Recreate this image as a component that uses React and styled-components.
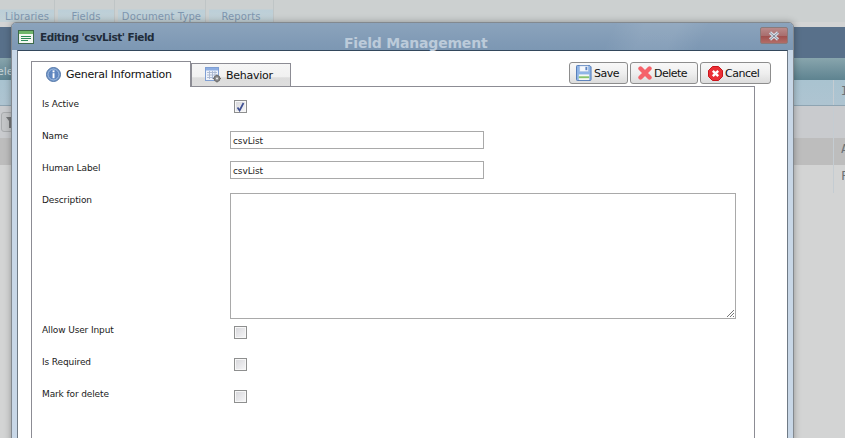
import React from 'react';
import styled, { createGlobalStyle } from 'styled-components';

const GlobalStyle = createGlobalStyle`
    html, body {
        margin: 0;
        padding: 0;
        background: #d3d4d4;
    }
    * {
        box-sizing: border-box;
    }
`;

const Page = styled.div`
    position: relative;
    width: 845px;
    height: 438px;
    overflow: hidden;
    background: #d3d4d4;
    font-family: 'DejaVu Sans', sans-serif;
`;

const TopNav = styled.div`
    height: 22px;
    display: flex;
    background: #ccd0d0;
`;

const NavTab = styled.div`
    width: ${(p) => p.$width}px;
    margin-right: 3px;
    padding-top: 11px;
    text-align: center;
    font-size: 10px;
    line-height: 12px;
    letter-spacing: 0.1px;
    color: #7f97b0;
    border-right: 1px solid #bfc5c6;
    background: linear-gradient(#ccd0d0 0, #ccd0d0 9px, #bccfd8 10px, #c4d2d7 22px);
`;

const Banner = styled.div`
    margin-top: 5px;
    height: 31px;
    background: #58708a;
`;

const GridBand = styled.div`
    height: 22px;
    padding-left: 0;
    overflow: hidden;
    font-size: 11px;
    line-height: 28px;
    text-indent: -3px;
    color: #c5d3d6;
    background: linear-gradient(#88a5ad, #5e8390);
`;

const GridHead = styled.div`
    display: flex;
    justify-content: flex-end;
    height: 26px;
    background: linear-gradient(#a9c3d0, #aec4d1);
    border-bottom: 1px solid #8ea4b2;
`;

const GridCell = styled.div`
    width: 12px;
    padding: 4px 0 0 7px;
    border-left: 1px solid #c4ccd2;
    font-family: 'DejaVu Sans Mono', monospace;
    font-size: 12px;
    color: #6a7277;
`;

const GridRow = styled.div`
    display: flex;
    justify-content: flex-end;
    height: ${(p) => p.$height}px;
    background: ${(p) => p.$bg};
`;

const Toolbar = styled(GridRow)`
    padding-left: 1px;
    justify-content: space-between;
`;

const FilterButton = styled.div`
    width: 12px;
    height: 20px;
    margin-top: 6px;
    padding-left: 4px;
    border: 1px solid #a9acae;
    border-radius: 3px;
    background: #c4c6c8;
`;

const Dialog = styled.div`
    position: absolute;
    left: 11px;
    top: 22px;
    width: 783px;
    height: 440px;
    padding: 0 5px;
    border: 1px solid #83898f;
    border-radius: 5px 5px 0 0;
    background: #c8d7e7;
    box-shadow: 0 0 7px rgba(0, 0, 0, 0.3);
`;

const TitleBar = styled.div`
    position: relative;
    height: 27px;
    margin: 0 -5px;
    padding-left: 6px;
    display: flex;
    align-items: center;
    gap: 6px;
    border-radius: 4px 4px 0 0;
    background:
        linear-gradient(115deg, transparent 0 76%, rgba(255, 255, 255, 0.08) 80% 84%, transparent 88%),
        linear-gradient(#8ba3bc, #7c97b3);
`;

const TitleText = styled.span`
    font-size: 10.5px;
    font-weight: bold;
    letter-spacing: -0.5px;
    color: #1f2c3a;
`;

const GhostTitle = styled.span`
    position: absolute;
    left: 332px;
    top: 12px;
    font-size: 14px;
    font-weight: bold;
    letter-spacing: -0.2px;
    color: #bccbda;
`;

const CloseButton = styled.div`
    position: absolute;
    right: 5px;
    top: 4px;
    width: 28px;
    height: 17px;
    display: flex;
    align-items: center;
    justify-content: center;
    border: 1px solid #8b7a7a;
    border-radius: 2px;
    background: linear-gradient(#b98a8a 0, #a96f6f 50%, #a0504e 55%, #b26d68 100%);
`;

const Body = styled.div`
    height: 420px;
    padding: 10px 32px 0 13px;
    background: #ffffff;
    border-top: 1px solid #33475c;
    border-left: 1px solid #6f7a85;
    border-right: 1px solid #6f7a85;
`;

const TabStrip = styled.div`
    display: flex;
    align-items: flex-end;
    height: 25px;
    position: relative;
`;

const Tab = styled.div`
    height: ${(p) => (p.$active ? 26 : 24)}px;
    width: ${(p) => p.$width}px;
    margin-bottom: -1px;
    padding-left: ${(p) => p.$pad}px;
    display: flex;
    align-items: center;
    gap: ${(p) => p.$gap}px;
    font-size: 11px;
    letter-spacing: -0.25px;
    color: #111111;
    position: relative;
    z-index: ${(p) => (p.$active ? 2 : 1)};
    border: 1px solid #8c8c94;
    border-bottom: ${(p) => (p.$active ? 'none' : '1px solid #8c8c94')};
    background: ${(p) => (p.$active ? '#ffffff' : 'linear-gradient(#f6f6f6 0, #f0f0f0 60%, #dcdcdc 62%, #dedede 100%)')};
`;

const ButtonRow = styled.div`
    margin-left: auto;
    margin-right: -16px;
    margin-bottom: 2px;
    display: flex;
    gap: 2px;
`;

const ActionButton = styled.div`
    width: ${(p) => p.$width}px;
    height: 22px;
    padding-left: ${(p) => p.$pad}px;
    display: flex;
    align-items: center;
    gap: 2px;
    font-size: 11px;
    letter-spacing: -0.5px;
    color: #111111;
    border: 1px solid #8d8d8d;
    border-radius: 3px;
    background: linear-gradient(#f8f8f8 0, #efefef 50%, #dcdcdc 100%);
`;

const Panel = styled.div`
    height: 400px;
    padding: 0 19px 0 10px;
    border: 1px solid #8c8c94;
    border-bottom: none;
    display: grid;
    grid-template-columns: 188px 1fr;
    grid-auto-rows: min-content;
`;

const Label = styled.div`
    height: ${(p) => p.$height}px;
    padding-top: ${(p) => p.$top}px;
    font-size: 9px;
    line-height: 11px;
    letter-spacing: -0.12px;
    color: #1a1a1a;
`;

const FieldCell = styled.div`
    height: ${(p) => p.$height}px;
    padding-top: ${(p) => p.$top}px;
    padding-left: ${(p) => p.$left || 0}px;
`;

const TextBox = styled.div`
    width: 254px;
    height: 18px;
    padding: 0 2px;
    border: 1px solid #a9a9a9;
    font-size: 9px;
    line-height: 18px;
    letter-spacing: -0.1px;
    color: #222222;
`;

const TextArea = styled.div`
    position: relative;
    width: 506px;
    height: 126px;
    border: 1px solid #a9a9a9;
`;

const ResizeGrip = styled.svg`
    position: absolute;
    right: 0;
    bottom: 0;
`;

const CheckBox = styled.div`
    width: 13px;
    height: 13px;
    display: flex;
    align-items: center;
    justify-content: center;
    border: 1px solid #8e8f8f;
    box-shadow: inset 0 0 0 1px #f7f7f7;
    background: linear-gradient(135deg, #d6d6da 0, #f0f0f2 80%, #fdfdfd 100%);
`;

const FormIcon = () => (
    <svg width="16" height="16" viewBox="0 0 16 16">
        <rect x="0.5" y="1.5" width="15" height="13" fill="#f4f7f2" stroke="#3d6a4a" />
        <rect x="1" y="2" width="14" height="3" fill="#6fb56a" />
        <path d="M3 7.5h10M3 9.5h10M3 11.5h7" stroke="#2c8a58" strokeWidth="1" />
    </svg>
);

const InfoIcon = () => (
    <svg width="15" height="15" viewBox="0 0 15 15">
        <circle cx="7.5" cy="7.5" r="7" fill="#6f95c8" stroke="#5577a8" />
        <circle cx="7.5" cy="7.5" r="5.4" fill="#5f86c0" stroke="#a8c1e2" strokeWidth="0.8" />
        <rect x="6.6" y="3.4" width="1.9" height="1.9" fill="#ffffff" />
        <rect x="6.6" y="6.2" width="1.9" height="5" fill="#ffffff" />
    </svg>
);

const BehaviorIcon = () => (
    <svg width="17" height="16" viewBox="0 0 17 16">
        <rect x="0.5" y="0.5" width="13" height="13" fill="#eef2fa" stroke="#7f9fd4" />
        <rect x="1" y="1" width="12" height="2.5" fill="#8eaee2" />
        <path d="M2 5.5h10M2 8h10M2 10.5h10M4.5 4v8M7.5 4v8M10 4v8" stroke="#a7b6cf" strokeWidth="0.9" />
        <circle cx="12" cy="11.5" r="3" fill="#8b8b8b" stroke="#6a6a6a" />
        <circle cx="12" cy="11.5" r="1.1" fill="#e8e8e8" />
        <path d="M12 7.5v1.4M12 14.2v1.4M8 11.5h1.4M14.6 11.5h1.4" stroke="#6f6f6f" strokeWidth="1.2" />
    </svg>
);

const SaveIcon = () => (
    <svg width="16" height="16" viewBox="0 0 17 17">
        <path d="M0.5 1.5a1 1 0 0 1 1-1h13l1.5 1.5v13.5a1 1 0 0 1-1 1h-13.5a1 1 0 0 1-1-1z" fill="#8fb5e6" stroke="#4f77b5" />
        <rect x="4" y="1" width="9" height="6" fill="#f4f7fc" stroke="#a9bfdf" strokeWidth="0.6" />
        <rect x="10" y="2" width="2" height="3.5" fill="#5d85c2" />
        <rect x="3" y="10" width="11" height="6" fill="#f6f8f4" />
        <rect x="3" y="12" width="11" height="2" fill="#86c46c" />
    </svg>
);

const DeleteIcon = () => (
    <svg width="14" height="14" viewBox="0 0 14 14">
        <path d="M2.5 2.5L11.5 11.5M11.5 2.5L2.5 11.5" stroke="#f5636b" strokeWidth="4.4" strokeLinecap="round" />
    </svg>
);

const CancelIcon = () => (
    <svg width="15" height="15" viewBox="0 0 15 15">
        <path d="M4.5 0.5h6l4 4v6l-4 4h-6l-4-4v-6z" fill="#ea2f35" stroke="#c9151c" />
        <path d="M4.8 4.8L10.2 10.2M10.2 4.8L4.8 10.2" stroke="#ffffff" strokeWidth="2.4" />
    </svg>
);

const CloseGlyph = () => (
    <svg width="12" height="10" viewBox="0 0 12 10">
        <path d="M2 1.5L10 8.5M10 1.5L2 8.5" stroke="#d7dde6" strokeWidth="3" />
        <path d="M2 1.5L10 8.5M10 1.5L2 8.5" stroke="#5f6a78" strokeWidth="0.7" />
    </svg>
);

const CheckMark = () => (
    <svg width="9" height="10" viewBox="0 0 9 10">
        <path d="M1.5 5.5L3.6 8.5L7.5 1" fill="none" stroke="#3e4f92" strokeWidth="1.7" />
    </svg>
);

const FilterGlyph = () => (
    <svg width="8" height="12" viewBox="0 0 8 12">
        <path d="M0 1h8L5 5v7H3V5z" fill="#77797b" />
    </svg>
);

const navTabs = [
    { label: 'Libraries', width: 55 },
    { label: 'Fields', width: 57 },
    { label: 'Document Type', width: 88 },
    { label: 'Reports', width: 65 },
];

const checkRows = ['Allow User Input', 'Is Required', 'Mark for delete'];

function App() {
    return (
        <Page>
            <GlobalStyle />
            <TopNav>
                {navTabs.map((tab) => (
                    <NavTab key={tab.label} $width={tab.width}>
                        {tab.label}
                    </NavTab>
                ))}
            </TopNav>
            <Banner />
            <GridBand>elect</GridBand>
            <GridHead>
                <GridCell>I</GridCell>
            </GridHead>
            <Toolbar $height={32} $bg="#c9cbce">
                <FilterButton>
                    <FilterGlyph />
                </FilterButton>
                <GridCell />
            </Toolbar>
            <GridRow $height={27} $bg="#bdbdbd">
                <GridCell>A</GridCell>
            </GridRow>
            <GridRow $height={28} $bg="#d3d4d4">
                <GridCell>F</GridCell>
            </GridRow>

            <Dialog>
                <TitleBar>
                    <FormIcon />
                    <TitleText>Editing 'csvList' Field</TitleText>
                    <GhostTitle>Field Management</GhostTitle>
                    <CloseButton>
                        <CloseGlyph />
                    </CloseButton>
                </TitleBar>
                <Body>
                    <TabStrip>
                        <Tab $active $width={160} $pad={14} $gap={5}>
                            <InfoIcon />
                            General Information
                        </Tab>
                        <Tab $width={100} $pad={13} $gap={4}>
                            <BehaviorIcon />
                            Behavior
                        </Tab>
                        <ButtonRow>
                            <ActionButton $width={59} $pad={6}>
                                <SaveIcon />
                                Save
                            </ActionButton>
                            <ActionButton $width={68} $pad={7}>
                                <DeleteIcon />
                                Delete
                            </ActionButton>
                            <ActionButton $width={71} $pad={7}>
                                <CancelIcon />
                                Cancel
                            </ActionButton>
                        </ButtonRow>
                    </TabStrip>
                    <Panel>
                        <Label $height={41} $top={12}>Is Active</Label>
                        <FieldCell $height={41} $top={13} $left={4}>
                            <CheckBox>
                                <CheckMark />
                            </CheckBox>
                        </FieldCell>
                        <Label $height={32} $top={3}>Name</Label>
                        <FieldCell $height={32} $top={3}>
                            <TextBox>csvList</TextBox>
                        </FieldCell>
                        <Label $height={32} $top={3}>Human Label</Label>
                        <FieldCell $height={32} $top={1}>
                            <TextBox>csvList</TextBox>
                        </FieldCell>
                        <Label $height={130} $top={3}>Description</Label>
                        <FieldCell $height={130} $top={1}>
                            <TextArea>
                                <ResizeGrip width="9" height="9" viewBox="0 0 9 9">
                                    <path d="M1 8L8 1M4 8L8 4M7 8L8 7" stroke="#777777" strokeWidth="1" />
                                </ResizeGrip>
                            </TextArea>
                        </FieldCell>
                        {checkRows.map((label) => (
                            <React.Fragment key={label}>
                                <Label $height={32} $top={3}>{label}</Label>
                                <FieldCell $height={32} $top={4} $left={4}>
                                    <CheckBox />
                                </FieldCell>
                            </React.Fragment>
                        ))}
                    </Panel>
                </Body>
            </Dialog>
        </Page>
    );
}

export default App;
